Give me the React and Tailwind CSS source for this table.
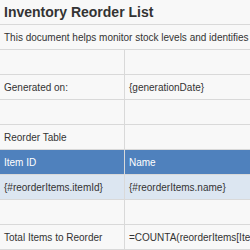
import React from 'react';

const rows = [
  { a: 'Generated on:', b: '{generationDate}' },
  { a: '', b: '' },
  { a: 'Reorder Table', b: '' },
  { a: 'Item ID', b: 'Name', kind: 'head' },
  { a: '{#reorderItems.itemId}', b: '{#reorderItems.name}', kind: 'data' },
  { a: '', b: '' },
  { a: 'Total Items to Reorder', b: '=COUNTA(reorderItems[ItemID])' },
];

function Row({ a, b, kind }) {
  const bg =
    kind === 'head'
      ? 'bg-[#4f81bd] text-white'
      : kind === 'data'
      ? 'bg-[#dce6f1] text-[#333]'
      : 'bg-[#f8f8f8] text-[#333]';
  return (
    <div className={`flex h-[25px] border-b border-[#d9d9d9] ${bg}`}>
      <div className="w-[125px] shrink-0 border-r border-[#d9d9d9] px-[4px] flex items-center whitespace-nowrap overflow-hidden">
        {a}
      </div>
      <div className="w-[300px] shrink-0 px-[4px] flex items-center whitespace-nowrap overflow-hidden">
        {b}
      </div>
    </div>
  );
}

export default function App() {
  return (
    <div className="w-[250px] h-[250px] overflow-hidden bg-white font-['Liberation_Sans',Arial,sans-serif] text-[10px]">
      <div className="w-[425px]">
        {/* Title */}
        <div className="h-[25px] border-b border-[#d9d9d9] bg-[#f8f8f8] px-[4px] flex items-center text-[14px] font-bold text-[#333]">
          Inventory Reorder List
        </div>
        {/* Description */}
        <div className="h-[25px] border-b border-[#d9d9d9] bg-[#f8f8f8] px-[4px] flex items-center text-[#333] whitespace-nowrap">
          This document helps monitor stock levels and identifies items that need to be reordered.
        </div>
        <Row a="" b="" />
        {rows.map((r, i) => (
          <Row key={i} {...r} />
        ))}
      </div>
    </div>
  );
}
